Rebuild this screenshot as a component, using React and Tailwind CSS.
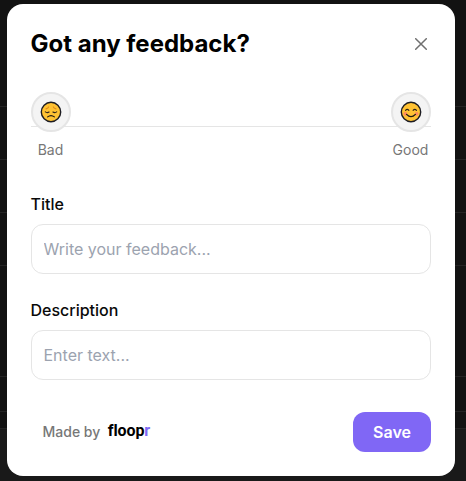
function BadFace() {
  return (
    <svg className="size-[22px]" viewBox="0 0 22 22" fill="none" strokeLinecap="round" strokeLinejoin="round">
      <circle cx="11" cy="11" r="9.7" fill="#ffc233" stroke="#1c1c22" strokeWidth="1.4" />
      <path d="M6 7.9Q8.1 7.4 8.7 5.9M16 7.9Q13.9 7.4 13.3 5.9" stroke="#e08a1a" strokeWidth="1.1" />
      <path d="M5.3 10.9Q7.2 12.2 9.1 11M12.9 11Q14.8 12.2 16.7 10.9" stroke="#30251a" strokeWidth="1.1" />
      <path d="M7.6 15.9Q11 13.2 14.4 15.9" stroke="#201a14" strokeWidth="1.2" />
    </svg>
  );
}

function GoodFace() {
  return (
    <svg className="size-[22px]" viewBox="0 0 22 22" fill="none" strokeLinecap="round" strokeLinejoin="round">
      <circle cx="11" cy="11" r="9.7" fill="#ffc233" stroke="#1c1c22" strokeWidth="1.4" />
      <circle cx="5.4" cy="12.8" r="1.9" fill="#ff8a5c" />
      <circle cx="16.6" cy="12.8" r="1.9" fill="#ff8a5c" />
      <path d="M5.5 9.4Q7.2 7.4 8.9 9.4M13.1 9.4Q14.8 7.4 16.5 9.4" stroke="#30251a" strokeWidth="1.1" />
      <path d="M6.6 13.4Q11 18 15.4 13.4" stroke="#201a14" strokeWidth="1.3" />
    </svg>
  );
}

function Rating({ label, children }) {
  return (
    <div className="flex w-10 flex-col items-center">
      <button className="flex size-10 items-center justify-center rounded-full border-2 border-[#e5e5e5] bg-[#f4f4f4]">
        {children}
      </button>
      <span className="mt-2 text-sm leading-5 text-[#777777]">{label}</span>
    </div>
  );
}

function Field({ label, placeholder }) {
  return (
    <label className="flex flex-col gap-2">
      <span className="text-base leading-6 font-medium text-[#090909]">{label}</span>
      <input
        className="h-[50px] w-full rounded-xl border border-[#e5e5e5] bg-white px-3 text-base text-black outline-none placeholder:text-[#9ca3af]"
        placeholder={placeholder}
      />
    </label>
  );
}

function Backdrop() {
  return (
    <div className="col-start-1 row-start-1 flex flex-col bg-[#121212] *:border-b *:border-[#242424]">
      <div className="h-[107px]" />
      <div className="h-[53px]" />
      <div className="h-[53px]" />
      <div className="h-[53px]" />
      <div className="h-[111px]" />
      <div className="h-[35px]" />
      <div className="h-[17px]" />
      <div className="flex-1 !border-b-0 bg-[#191919]" />
    </div>
  );
}

export default function App() {
  return (
    <div className="grid h-[481px] w-[466px] overflow-hidden font-['Inter',sans-serif]">
      <Backdrop />
      <main className="col-start-1 row-start-1 mt-1 ml-[6.5px] flex h-[472px] w-[448px] flex-col rounded-2xl bg-white p-6">
        <header className="flex h-8 items-center justify-between">
          <h1 className="text-2xl leading-8 font-bold text-black">Got any feedback?</h1>
          <button aria-label="Close" className="mr-1 text-[#6f6f6f]">
            <svg className="size-3" viewBox="0 0 12 12" fill="none" stroke="currentColor" strokeWidth="1.5" strokeLinecap="round">
              <path d="M0.7 0.7L11.3 11.3M11.3 0.7L0.7 11.3" />
            </svg>
          </button>
        </header>

        <section className="mt-8 grid h-[68px]">
          <div className="col-start-1 row-start-1 mt-[34px] h-px bg-[#e5e5e5]" />
          <div className="z-10 col-start-1 row-start-1 flex justify-between">
            <Rating label="Bad"><BadFace /></Rating>
            <Rating label="Good"><GoodFace /></Rating>
          </div>
        </section>

        <div className="mt-8 flex flex-col gap-6">
          <Field label="Title" placeholder="Write your feedback..." />
          <Field label="Description" placeholder="Enter text..." />
        </div>

        <footer className="mt-8 flex h-10 items-center justify-between">
          <div className="ml-3 flex items-center">
            <span className="text-sm font-medium text-[#777777]">Made by</span>
            <span className="mb-[3px] ml-[7.5px] font-['Roboto',sans-serif] text-base leading-5 font-bold tracking-[-0.1px] text-black [font-variant-ligatures:none]">
              floop<span className="text-[#8067f5]">r</span>
            </span>
          </div>
          <button className="h-10 w-[78px] rounded-xl bg-[#8067f5] pl-px text-base font-semibold text-white">Save</button>
        </footer>
      </main>
    </div>
  );
}
